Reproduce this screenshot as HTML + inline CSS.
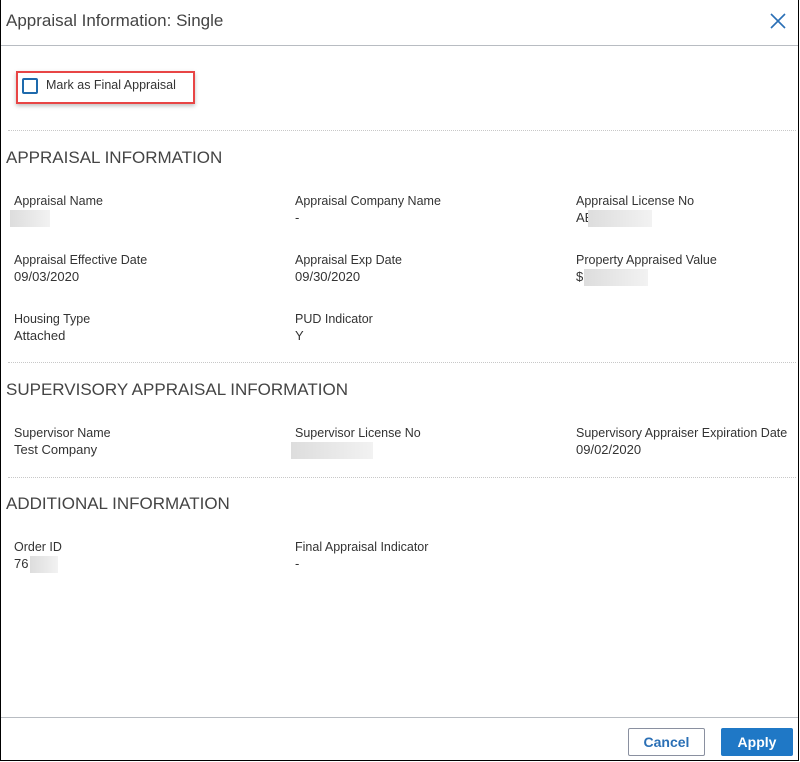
<!DOCTYPE html>
<html><head><style>
*{margin:0;padding:0;box-sizing:border-box}
body{width:800px;height:762px;background:#fff;font-family:"Liberation Sans",sans-serif;color:#333;position:relative;overflow:hidden}
.frame{position:absolute;left:0;top:0;width:799px;height:761px;border:1px solid #000;border-top:none}
.a{position:absolute;white-space:nowrap}
.title{left:6px;top:11px;font-size:17px;color:#444}
.hl{position:absolute;left:1px;right:2px;height:1px;background:#b8bcc2}
.dl{position:absolute;left:8px;right:4px;border-top:1px dotted #c8c8c8}
.h{font-size:17px;color:#444;left:6px}
.l{font-size:12.5px;color:#333}
.v{font-size:13px;color:#333}
.blur{position:absolute;height:17px;background:linear-gradient(90deg,#ddd,#f2f2f2)}
</style></head><body>
<div class="frame"></div>
<div class="a title">Appraisal Information: Single</div>
<svg class="a" style="left:769px;top:12px" width="18" height="18" viewBox="0 0 18 18"><path d="M2 2L16 16M16 2L2 16" stroke="#2a6fb5" stroke-width="1.6"/></svg>
<div class="hl" style="top:45px"></div>
<div class="a" style="left:16px;top:71px;width:179px;height:33px;border:2px solid #e84545;box-shadow:0 2px 4px rgba(0,0,0,.25)"></div>
<div class="a" style="left:22px;top:78px;width:16px;height:16px;border:2px solid #1e6aac;border-radius:2px"></div>
<div class="a l" style="left:46px;top:78px">Mark as Final Appraisal</div>
<div class="dl" style="top:130px"></div>
<div class="a h" style="top:148px">APPRAISAL INFORMATION</div>

<div class="a l" style="left:14px;top:194px">Appraisal Name</div>
<div class="blur" style="left:10px;top:210px;width:40px"></div>
<div class="a l" style="left:295px;top:194px">Appraisal Company Name</div>
<div class="a v" style="left:295px;top:210px">-</div>
<div class="a l" style="left:576px;top:194px">Appraisal License No</div>
<div class="a v" style="left:576px;top:210px">AE</div>
<div class="blur" style="left:588px;top:210px;width:64px"></div>

<div class="a l" style="left:14px;top:253px">Appraisal Effective Date</div>
<div class="a v" style="left:14px;top:269px">09/03/2020</div>
<div class="a l" style="left:295px;top:253px">Appraisal Exp Date</div>
<div class="a v" style="left:295px;top:269px">09/30/2020</div>
<div class="a l" style="left:576px;top:253px">Property Appraised Value</div>
<div class="a v" style="left:576px;top:269px">$</div>
<div class="blur" style="left:584px;top:269px;width:64px"></div>

<div class="a l" style="left:14px;top:312px">Housing Type</div>
<div class="a v" style="left:14px;top:328px">Attached</div>
<div class="a l" style="left:295px;top:312px">PUD Indicator</div>
<div class="a v" style="left:295px;top:328px">Y</div>

<div class="dl" style="top:362px"></div>
<div class="a h" style="top:380px">SUPERVISORY APPRAISAL INFORMATION</div>
<div class="a l" style="left:14px;top:426px">Supervisor Name</div>
<div class="a v" style="left:14px;top:442px">Test Company</div>
<div class="a l" style="left:295px;top:426px">Supervisor License No</div>
<div class="blur" style="left:291px;top:442px;width:82px"></div>
<div class="a l" style="left:576px;top:426px">Supervisory Appraiser Expiration Date</div>
<div class="a v" style="left:576px;top:442px">09/02/2020</div>

<div class="dl" style="top:477px"></div>
<div class="a h" style="top:494px">ADDITIONAL INFORMATION</div>
<div class="a l" style="left:14px;top:540px">Order ID</div>
<div class="a v" style="left:14px;top:556px">76</div>
<div class="blur" style="left:30px;top:556px;width:28px"></div>
<div class="a l" style="left:295px;top:540px">Final Appraisal Indicator</div>
<div class="a v" style="left:295px;top:556px">-</div>

<div class="hl" style="top:717px"></div>
<div class="a" style="left:628px;top:728px;width:77px;height:28px;border:1px solid #8a90a0;border-radius:2px;color:#2a6fb5;font-size:14px;font-weight:bold;text-align:center;line-height:26px">Cancel</div>
<div class="a" style="left:721px;top:728px;width:72px;height:28px;background:#1f78c6;border-radius:2px;color:#fff;font-size:14px;font-weight:bold;text-align:center;line-height:28px">Apply</div>
</body></html>
